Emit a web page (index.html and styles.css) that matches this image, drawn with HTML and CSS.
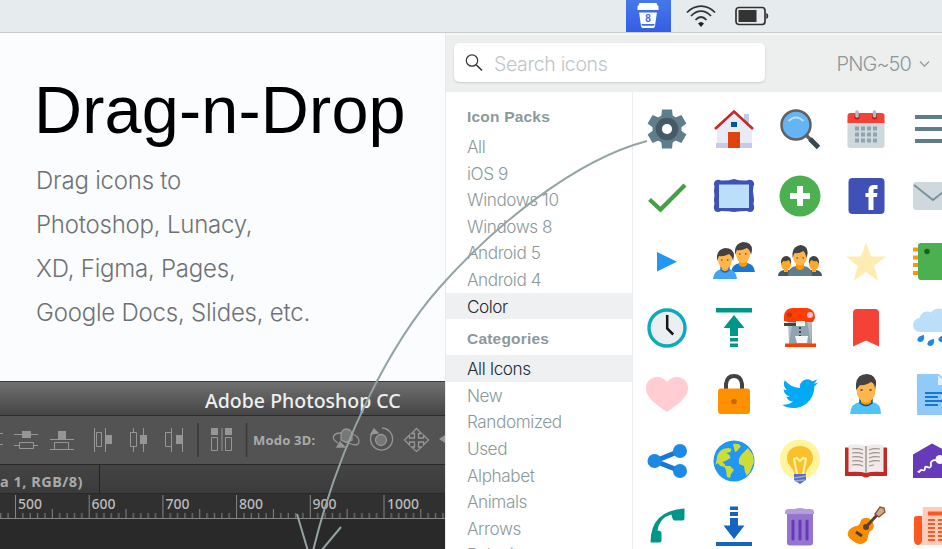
FILE: index.html
```
<!DOCTYPE html>
<html lang="en">
<head>
<meta charset="utf-8">
<title>Drag-n-Drop</title>
<link rel="stylesheet" href="styles.css">
</head>
<body>
<header class="menubar">
  <div class="tray-app">
    <svg width="24" height="30" viewBox="0 0 24 30"><path fill="#fff" d="M3.500 3h17l1 2.500 1 .5v4H1.500V6l1-.5z"/><path fill="#fff" d="M3 12h18l-2 14q-.2 2-2 2H7q-1.800 0-2-2z"/><path fill="#3d6dea" d="M3 10h18v2.500H3zM5.500 24h13l-.3 1.700H5.800z"/><text x="12" y="22" class="tray-num">8</text></svg>
  </div>
  <svg class="wifi" width="32" height="26" viewBox="0 0 32 26"><g fill="none" stroke="#303538" stroke-width="1.800"><path d="M2 10.500C10 2 22 2 30 10.500M6 14C12 7.500 20 7.500 26 14M10.500 18C14 14 18 14 21.500 18"/></g><path fill="#222" d="M13 21.500q3-3 6 0L16 25z"/></svg>
  <svg class="battery" width="34" height="20" viewBox="0 0 34 20"><rect x="1" y="1.500" width="29" height="17" rx="3" fill="none" stroke="#333" stroke-width="1.700"/><path fill="#333" d="M3.500 4h18v12h-18zM31.300 7q2 .5 2 3t-2 3z"/></svg>
</header>
<main class="stage">
  <section class="left">
    <div class="hero">
      <h1>Drag-n-Drop</h1>
      <p>Drag icons to</p>
      <p>Photoshop, Lunacy,</p>
      <p>XD, Figma, Pages,</p>
      <p>Google Docs, Slides, etc.</p>
    </div>
    <div class="ps">
      <div class="ps-title">Adobe Photoshop CC</div>
      <div class="ps-tools">
        <svg width="445" height="48" viewBox="0 0 445 48">
          <g fill="none" stroke="#969696">
            <path d="M0 17.500h3M0 28.500h3M14 18.500h24M14 29.500h24M50 23.500h24M50 33.500h24"/>
            <path fill="#535353" d="M19.500 26.500h14v6h-14zM54.500 26.500h14v7h-14z"/>
            <path d="M94.500 12v24M105.500 12v24M133.500 12v24M143.500 12v24M171.500 12v24M182.500 12v24M222 12v23"/>
            <path fill="#535353" d="M96.500 16.500h5v14h-5zM130.500 16.500h6v14h-6zM165.500 16.500h6v14h-6zM211.500 21.500h6v13h-6zM225.500 21.500h6v13h-6z"/>
          </g>
          <path fill="#969696" d="M22 15h9v7h-9zM58 15h8v8h-8zM106 19h6v9h-6zM140 19h7v9h-7zM176 19h6v9h-6zM211 12h7v7h-7zM225 12h7v7h-7z"/>
          <path stroke="#383838" stroke-width="1.500" d="M198 7v34M246.500 7v34"/>
          <text x="253" y="29" class="mode">Modo 3D:</text>
          <g fill="none" stroke="#969696" stroke-width="1.300">
            <path fill="#777" d="M341 24v-5q1-6 5-6 6 0 6 7v4q-5 4-11 0z"/><path d="M341 17c-9 0-10 6-3 10M352 18c9 3 8 10 4 11-5 0-8-3-13-4"/><path fill="#969696" d="M337 31l3-5 5 5z"/>
            <path d="M374 15a11 11 0 1 0 8-3"/><circle cx="381" cy="24" r="5.500" fill="#777"/><path fill="#969696" d="M371 18l3-5 4 4z"/>
            <path d="M416.500 12.500l5 5h-3v4.500h5v-3l5 5-5 5v-3h-5v5h3l-5 4.500-5-4.500h3v-5h-5v3l-5-5 5-5v3h5v-4.500h-3z"/>
          </g>
          <path fill="#969696" d="M439 23l6-4v8z"/>
        </svg>
      </div>
      <div class="ps-tab"><span>a 1, RGB/8)</span></div>
      <div class="ps-ruler">
        <svg width="445" height="25" viewBox="0 0 445 25">
          <defs><pattern id="ticks" x="15" y="0" width="73.700" height="25" patternUnits="userSpaceOnUse"><path stroke="#858585" d="M.5 1v23M7.900 19v5M15.200 19v5M22.600 19v5M30 19v5M37.300 15v9M44.700 19v5M52.100 19v5M59.500 19v5M66.800 19v5"/></pattern></defs>
          <path fill="url(#ticks)" d="M0 0h445v24H0z"/><path stroke="#858585" d="M0 24.500h445"/>
          <g class="nums"><text x="18" y="14.500">500</text><text x="91.500" y="14.500">600</text><text x="165.500" y="14.500">700</text><text x="239" y="14.500">800</text><text x="312.500" y="14.500">900</text><text x="387" y="14.500">1000</text></g>
        </svg>
      </div>
      <div class="ps-canvas"></div>
    </div>
  </section>
  <section class="panel">
    <div class="searchbar">
      <div class="search"><svg width="18" height="19" viewBox="0 0 18 19"><circle cx="7" cy="7.500" r="5.700" fill="none" stroke="#333" stroke-width="1.200"/><path stroke="#333" stroke-width="1.600" d="M11.200 11.700l5.800 5.800"/></svg><span>Search icons</span></div>
      <div class="format">PNG~50<svg width="11" height="8" viewBox="0 0 11 8"><path fill="none" stroke="#939d9f" stroke-width="1.300" d="M1 1.500l4.500 4.800L10 1.500"/></svg></div>
    </div>
    <div class="content">
      <nav class="side">
        <h2>Icon Packs</h2>
        <ul><li>All</li><li>iOS 9</li><li>Windows 10</li><li>Windows 8</li><li>Android 5</li><li>Android 4</li><li class="on">Color</li></ul>
        <h2 class="cat">Categories</h2>
        <ul><li class="on">All Icons</li><li>New</li><li>Randomized</li><li>Used</li><li>Alphabet</li><li>Animals</li><li>Arrows</li><li>Baby items</li></ul>
      </nav>
      <div class="grid">
        <svg viewBox="0 0 48 48"><g fill="#607d8b"><path id="tooth" d="M19 4.500h10l1 9.500H18z"/><use href="#tooth" transform="rotate(60 24 24)"/><use href="#tooth" transform="rotate(120 24 24)"/><use href="#tooth" transform="rotate(180 24 24)"/><use href="#tooth" transform="rotate(240 24 24)"/><use href="#tooth" transform="rotate(300 24 24)"/><circle cx="24" cy="24" r="14.500"/></g><circle cx="24" cy="24" r="8.300" fill="none" stroke="#455a64" stroke-width="6"/><circle cx="24" cy="24" r="5" fill="#fff"/></svg>
        <svg viewBox="0 0 48 48"><path fill="#c5cae9" d="M34 9h5v11h-5z"/><path fill="#e8eaf6" d="M24 8L7 23v20h35V23z"/><path fill="#c5cae9" d="M6 38h36v5H6z"/><path fill="#e04312" d="M18 27h12v16H18z"/><path fill="#01579b" d="M21 17h6v5h-6z"/><path fill="none" stroke="#c62828" stroke-width="2.600" d="M5 24L24 6.500 43 24"/><path fill="#bf360c" d="M27 35h1v3h-1z"/></svg>
        <svg viewBox="0 0 48 48"><path stroke="#616161" stroke-width="3.500" d="M29 29l6 6"/><path stroke="#37474f" stroke-width="5" d="M34 34l8.500 8.500"/><circle cx="20" cy="20" r="14.500" fill="#64b5f6" stroke="#616161" stroke-width="2.500"/><path fill="none" stroke="#bbdefb" stroke-width="2" d="M12.500 16q7.500-7 15 0"/></svg>
        <svg viewBox="0 0 48 48"><path fill="#cfd8dc" d="M5.500 15h37v25q0 3-3 3h-31q-3 0-3-3z"/><path fill="#f44336" d="M42.500 11v7h-37v-7q0-3 3-3h31q3 0 3 3z"/><path stroke="#b71c1c" stroke-width="5" stroke-linecap="round" d="M15 10v2M32.500 10v2"/><path stroke="#b0bec5" stroke-width="3.500" stroke-linecap="round" d="M15 7v4M32.500 7v4"/><path stroke="#90a4ae" stroke-width="4" stroke-dasharray="4 2" d="M13 23.500h22M13 29.500h22M13 35.500h22"/></svg>
        <svg viewBox="0 0 48 48"><path fill="#607d8b" d="M6 10h36v4H6zM6 22h36v4H6zM6 34h36v4H6z"/></svg>

        <svg viewBox="0 0 48 48"><path fill="none" stroke="#43a047" stroke-width="4.200" d="M6.500 27.500l11 10L42 13"/></svg>
        <svg viewBox="0 0 48 48"><path fill="#3f51b5" d="M5 9q3-2 6-.5 7 .5 13-1.500 6 2 13 1.500 3-1.500 6 .5 2 3 .5 5-1 5 0 9 1 5 0 9 1.500 4-.5 7-3 2-6 0-7 0-13 1-6-1-13-1-3 2-6 0-2-3-.5-7-1-4 0-9-1-4 0-9-1.500-2 .5-5z"/><path fill="#bbdefb" d="M9 12.500h30v23.500H9z"/></svg>
        <svg viewBox="0 0 48 48"><circle cx="24" cy="24" r="20.500" fill="#4caf50"/><path fill="#fff" d="M21 14h6v7h7v6h-7v7h-6v-7h-7v-6h7z"/></svg>
        <svg viewBox="0 0 48 48"><rect x="6.500" y="6" width="36" height="36" rx="4" fill="#3f51b5"/><path fill="#fff" d="M34.900 25h-3.400v13h-5V25h-3v-4h3v-2.400c0-3.500 1.500-5.600 5.600-5.600h3.400v4h-2.300c-1.600 0-1.700.6-1.700 1.700V21h4z"/></svg>
        <svg viewBox="0 0 48 48"><rect x="4" y="10" width="40" height="28" rx="3" fill="#cfd8dc"/><path fill="none" stroke="#78909c" stroke-width="1.800" d="M5 13l19 15 19-15"/></svg>

        <svg viewBox="0 0 48 48"><path fill="#2196f3" d="M14 14v19.500l20-9.700z"/></svg>
        <svg viewBox="0 0 48 48"><g transform="translate(11 -4)"><path fill="#1976d2" d="M10 38q1-8 9-9h7q7 1 8 9z"/><path fill="#ff9800" d="M18 24h8v7q-4 4-8 0z"/><ellipse cx="22" cy="20" rx="7" ry="9" fill="#ffb74d"/><path fill="#424242" d="M14 21v-5q1-7 8-8 9 0 9 8l-1 5q-1-5-4-7-6 3-10 2z"/><path stroke="#8b5a20" stroke-width="1.500" d="M18 20h1.500M24 20h1.500"/></g><g transform="translate(-7 2)"><path fill="#42a5f5" d="M10 39q1-9 9-10h7q7 1 8 10z"/><path fill="#ffa726" stroke="#1565c0" stroke-width="1.200" d="M18 24h8v6q-4 4-8 0z"/><ellipse cx="22" cy="20" rx="7" ry="9" fill="#ffb74d"/><path fill="#424242" d="M14 21v-5q1-7 8-8 9 0 9 8l-1 5q-1-5-4-7-6 3-10 2z"/><path stroke="#8b5a20" stroke-width="1.500" d="M18 20h1.500M24 20h1.500"/></g></svg>
        <svg viewBox="0 0 48 48"><g id="small"><path fill="#455a64" d="M2 38q0-5 6-6h6v6z"/><ellipse cx="10" cy="26" rx="5" ry="6" fill="#ffa726"/><path fill="#424242" d="M5 26v-3q1-5 6-5 5 1 4 8l-2-4q-4 2-6 1z"/><path stroke="#ffa726" stroke-width="4" d="M10 30v4"/></g><use href="#small" transform="matrix(-1 0 0 1 48 0)"/><path fill="#607d8b" d="M12 38q0-9 8-10h8q8 1 8 10z"/><path fill="#ff9800" d="M20 24h8v6q-4 4-8 0z"/><ellipse cx="24" cy="19" rx="7" ry="8.500" fill="#ffb74d"/><path fill="#424242" d="M16.500 20v-5q1-7 8-8 8 1 7 9l-1 4q-1-5-3-7-5 3-9 2z"/><path stroke="#8b5a20" stroke-width="1.500" d="M20.500 20H22M26.500 20H28"/></svg>
        <svg viewBox="0 0 48 48"><path fill="#ffecb3" d="M24 4l5 14.500h15L32 28l4.500 15L24 34l-12.500 9L16 28 4 18.500h15z"/></svg>
        <svg viewBox="0 0 48 48"><path stroke="#ff9800" stroke-width="4" d="M4 11.500h8M4 19.500h8M4 27h8M4 35h8"/><rect x="9" y="5" width="36" height="37" rx="3" fill="#4caf50"/><circle cx="18" cy="13.500" r="2.700" fill="#1b5e20"/></svg>

        <svg viewBox="0 0 48 48"><circle cx="24" cy="24" r="18" fill="#eceff1" stroke="#0aacbc" stroke-width="3.400"/><path fill="none" stroke="#161616" stroke-width="2.500" d="M24.200 11v13.500l6 6"/></svg>
        <svg viewBox="0 0 48 48"><path fill="#009688" d="M6 4h36v4.500H6zM24 11l10.500 13H28v8h-8v-8h-6.500zM20 34h8v3.500h-8zM20 39.500h8V43h-8z"/></svg>
        <svg viewBox="0 0 48 48"><path fill="#90a4ae" d="M13 18h23v24H13z"/><path fill="#b0bec5" d="M12 17h5l-4 22zM36 17h-5l4 22z"/><path fill="#ff3d00" d="M8 17v-5q1-8 9-8h14q8 1 8 10l-2 4H12zM9 39.500h31V43H9z"/><circle cx="13.500" cy="11" r="2.500" fill="#bf360c"/><circle cx="34" cy="11" r="3" fill="#f8bbd0"/><path fill="#444" d="M8 19h15v3H8z"/><path stroke="#37474f" stroke-width="2" stroke-dasharray="2 2" d="M24 23v10"/><path fill="#f5f5f5" d="M20 17h9v5h-9zM19 32h13l-1 7H21z"/></svg>
        <svg viewBox="0 0 48 48"><path fill="#f44336" d="M37 42.500l-13-6-13 6V9q0-4 4-4h18q4 0 4 4z"/></svg>
        <svg viewBox="0 0 48 48"><g fill="#bbdefb"><circle cx="11" cy="21" r="7"/><circle cx="18" cy="15" r="7.500"/><circle cx="30" cy="15" r="10.500"/><path d="M11 17h31v11H11z"/></g><path id="drop" fill="#1e88e5" d="M15 31q1 7-4 7-4-1-2-4 1-2 6-3z"/><use href="#drop" x="10" y="4"/><use href="#drop" x="21"/></svg>

        <svg viewBox="0 0 48 48"><path fill="#ffcdd2" d="M34 6c-4.500 0-8 2-10 5-2-3-5.500-5-10-5C7.500 6 3 11 3 17c0 11 13 18 21 24 8-6 21-13 21-24 0-6-4.500-11-11-11z"/></svg>
        <svg viewBox="0 0 48 48"><path fill="none" stroke="#424242" stroke-width="4" d="M16 20v-7q1-8 8-8t8 8v7"/><rect x="8" y="17.500" width="32" height="25.500" rx="3" fill="#ff9000"/><circle cx="24" cy="30.500" r="2.800" fill="#c76700"/></svg>
        <svg viewBox="0 0 48 48"><path fill="#03a9f4" d="M42 11.400c-1.300.6-2.700 1-4.200 1.100 1.500-.9 2.700-2.300 3.200-4-1.400.8-3 1.400-4.700 1.800A7.400 7.400 0 0 0 24 17c-6.200-.3-11.600-3.200-15.200-7.700-2 3.700-.5 7.700 2.300 9.800-1.200 0-2.400-.4-3.400-.9 0 3.500 2.600 6.500 6 7.200-1.100.3-2.200.4-3.400.1a7.400 7.400 0 0 0 7 5.100A15 15 0 0 1 6 33.700 20.900 20.900 0 0 0 17.300 37C31 37 38.600 25.600 38.300 15.200A15 15 0 0 0 42 11.400z"/></svg>
        <svg viewBox="0 0 48 48"><path fill="#4fc3f7" d="M8 43q1-11 10-12h12q9 1 9 12z"/><path fill="#ff9800" stroke="#01579b" stroke-width="1.500" d="M18 28h12v4q-6 5-12 0z"/><ellipse cx="24" cy="19" rx="9.500" ry="12.500" fill="#ffb74d"/><path fill="#424242" d="M14 19v-6Q15 3 25 3q10 1 9 11l-1 5q0-7-4-8-7 4-11 3z"/><path stroke="#795548" stroke-width="1.800" d="M18.500 19h2M27.500 19h2"/></svg>
        <svg viewBox="0 0 48 48"><path fill="#90caf9" d="M8 3h22l10 10v31H8z"/><path fill="#e3f2fd" d="M29 4v10h10z"/><path fill="#1976d2" d="M16 21h17v2H16zM16 25h13v2H16zM16 29h17v2H16zM16 33h13v2H16z"/></svg>

        <svg viewBox="0 0 48 48"><path fill="none" stroke="#1976d2" stroke-width="5" d="M37 14L12 24l25 10"/><g fill="#1e88e5"><circle cx="11.500" cy="24" r="7"/><circle cx="37" cy="14" r="7"/><circle cx="37" cy="34" r="7"/></g></svg>
        <svg viewBox="0 0 48 48"><circle cx="24" cy="24" r="20.500" fill="#2196f3"/><path fill="#cddc39" d="M7.500 18q3-7 11-7l3 1-1 3-4 1 3 2 1 3-5 3-3 1 3 3-1 2-4-1-3-3-2 2zM23 7q6-1 8 2l-4 5-2 1-1-4zM38 11l5 7 1 7-4 10-3 4-2-4-1-6-5-2q-1-7 4-11zM14 29l6 0 4 4-3 4-1 4-3-1-1-7z"/></svg>
        <svg viewBox="0 0 48 48"><circle cx="24" cy="22.500" r="20" fill="#fff59d"/><path fill="#fbc02d" d="M24 9c-8 0-13 5-13 12 0 6 4 8 6 12l2 5h10l2-5c2-4 6-6 6-12 0-7-5-12-13-12z"/><path fill="none" stroke="#fff59d" stroke-width="2" d="M21 37l-3-15 3-1 3 3 3-3 3 1-3 15"/><path fill="#5c6bc0" d="M18 37h12v6l-3 2-3 2-3-2-3-2z"/><path stroke="#9fa8da" stroke-width="1.500" d="M18 41l12-2M19 44l10-1"/></svg>
        <svg viewBox="0 0 48 48"><path fill="#c62828" d="M3 10.500h42v28.500H28q-4 3-8 0H3z"/><path fill="#efebe9" d="M6.500 8q11-2 17.500 1 6-3 17.500-1v27q-11-1-17.500 1-6-2-17.500-1z"/><path stroke="#bcaaa4" stroke-width="2" d="M24 9v27"/><path fill="none" stroke="#a1918b" stroke-width="1.200" d="M10 12q6-1 11 1M10 16q6-1 11 1M10 20q6-1 11 1M10 24q6-1 11 1M10 28q6-1 11 1M27 13q5-2 11-1M27 17q5-2 11-1M27 21q5-2 11-1M27 25q5-2 11-1M27 29q3-1 5-1"/></svg>
        <svg viewBox="0 0 48 48"><path fill="#673ab7" d="M4 41V17.500L23 6.500l21 11V41z"/><circle cx="31" cy="22.500" r="4.500" fill="#fff"/><path fill="none" stroke="#fff" stroke-width="1.800" d="M30 24c-6-2-9 0-8 4 0 6-6-1-6 3 0 5-4 0-5 3q-1 2-2 0"/></svg>

        <svg viewBox="0 0 48 48"><path fill="#009688" d="M7.500 39.500q0-32 34-34v10q0 2-2 2h-8q-2 0-3-6-12 3-14 16 4 0 4 3v7q0 2-2 2z"/></svg>
        <svg viewBox="0 0 48 48"><path fill="#1565c0" d="M20 3.500h8V7h-8zM20 9h8v4h-8zM20 15h8v7.500h6.500L24 36 13.500 22.500H20zM6 39h36v4H6z"/></svg>
        <svg viewBox="0 0 48 48"><path fill="#b39ddb" d="M9 9q0-3 4-3h6q5-2 10 0h5q4 0 4 3v2H9z"/><path fill="#9575cd" d="M11 11h26v28.500q0 3-3 3H14q-3 0-3-3z"/><path stroke="#673ab7" stroke-width="3" stroke-linecap="round" d="M17 18v18M24 18v18M31 18v18"/></svg>
        <svg viewBox="0 0 48 48"><path fill="#fb8c00" d="M7 27q4-4 8-4 3-1 4-6 4-4 9-1l3 4q2 4-1 7-3 1-4 6 0 5-4 7-5 3-11-2-8-5-4-11z"/><circle cx="24" cy="24" r="3" fill="#5d4037"/><path stroke="#5d4037" stroke-width="3" d="M23 25l13-14"/><path stroke="#424242" stroke-width="3" d="M14 29l6 4"/><path fill="#d7a77b" stroke="#795548" stroke-width="1.300" d="M33 11l5-7 4 1 1 4-6 5z"/></svg>
        <svg viewBox="0 0 48 48"><path fill="#ffccbc" d="M14 4h30v38H12z"/><path fill="#ff5722" d="M5 15q0-2 3-2h5v25q-1 4-4 4t-4-4zM19 8.500h24v4H19z"/><path stroke="#ff5722" stroke-width="2" stroke-dasharray="7 3" d="M19 17h25M19 21h25M19 25h25M19 29h25M19 33h25M19 37h25"/></svg>
      </div>
    </div>
  </section>
</main>
<svg class="arrow" width="942" height="549" viewBox="0 0 942 549"><path d="M647 141C575 160 495 225 440 287C392 341 340 440 313 551M297 514L308 551M341 527L321 551"/></svg>
</body>
</html>
```

FILE: styles.css
```
* { box-sizing: border-box; margin: 0; padding: 0; }
body {
  position: relative;
  display: flex;
  flex-direction: column;
  width: 942px;
  height: 549px;
  overflow: hidden;
  background: #fafcfe;
  font-family: "Liberation Sans", Arial, sans-serif;
}
svg { display: block; flex: none; }

.menubar {
  display: flex;
  flex: none;
  height: 33px;
  padding-left: 626px;
  background: #e6ebee;
  border-bottom: 1px solid #c8cccf;
}
.tray-app {
  display: flex;
  justify-content: center;
  width: 44.500px;
  background: linear-gradient(#4678e8, #345de6);
}
.tray-num { font: bold 10px "Liberation Sans", sans-serif; fill: #3d6dea; text-anchor: middle; }
.wifi { margin: 2px 0 0 14px; }
.battery { margin: 6px 0 0 18px; }

.stage { display: flex; flex: 1; min-height: 0; }
.left { display: flex; flex-direction: column; flex: none; width: 445px; }
.hero { height: 348px; padding: 39px 0 0 36px; color: #6f7274; }
.hero h1 {
  height: 87px;
  margin-left: -2px;
  color: #000;
  font-size: 66.500px;
  font-weight: 400;
  line-height: 77px;
  letter-spacing: .2px;
}
.hero p {
  height: 44px;
  font-family: Inter, "Liberation Sans", sans-serif;
  font-size: 24px;
  font-weight: 300;
  line-height: 44px;
  letter-spacing: -.22px;
  white-space: nowrap;
}

.ps { flex: 1; background: #292929; border-top: 1px solid #24443d; font-family: "Open Sans", "Noto Sans", sans-serif; overflow: hidden; }
.ps-title {
  height: 34px;
  padding-left: 205px;
  background: linear-gradient(#707070, #454545);
  border-bottom: 1px solid #2c2c2c;
  color: #eee;
  font-family: "Noto Sans", sans-serif;
  font-size: 19.500px;
  font-weight: 500;
  line-height: 37px;
}
.ps-tools { height: 49px; background: #535353; border-bottom: 1px solid #292929; }
.mode { font: bold 13px "Noto Sans", sans-serif; fill: #aaa; letter-spacing: .2px; }
.ps-tab { height: 29px; background: linear-gradient(#444, #3b3b3b); border-bottom: 1px solid #292929; }
.ps-tab span {
  display: block;
  width: 100px;
  height: 28px;
  border-right: 1px solid #222;
  color: #aaa;
  font: bold 14.500px/32px "Noto Sans", sans-serif;
  letter-spacing: .5px;
}
.ps-ruler { height: 25px; background: #303030; }
.nums { font: 500 14px "Noto Sans", sans-serif; fill: #bbb; }

.panel { display: flex; flex-direction: column; flex: 1; min-width: 0; background: #fff; border-left: 1px solid #e6eaeb; }
.searchbar { display: flex; align-items: center; flex: none; height: 59px; padding: 0 12px 3px 8px; background: #edefef; border-top: 2px solid #f6f7f7; }
.search {
  display: flex;
  align-items: center;
  gap: 11px;
  width: 311px;
  height: 39px;
  padding-left: 11px;
  border-radius: 5px;
  background: #fff;
  box-shadow: 0 1px 2px #c4c8c9;
  color: #bfc5c7;
}
.search span, .format { font-family: Inter, sans-serif; font-size: 20px; font-weight: 300; }
.search span { padding-top: 3px; font-size: 19.500px; letter-spacing: -.35px; }
.format { display: flex; align-items: center; gap: 8px; margin: 4px 0 0 auto; color: #8c9799; white-space: nowrap; letter-spacing: -.9px; }

.content { display: flex; flex: 1; min-height: 0; overflow: hidden; }
.side { flex: none; width: 187px; padding-top: 11px; border-right: 1px solid #eceeef; color: #8c999b; }
.side h2 { height: 30px; padding-left: 21px; font: bold 15.500px/28px "Liberation Sans", sans-serif; letter-spacing: .2px; }
.side .cat { height: 30px; margin-top: 6px; }
.side ul { list-style: none; }
.side li { height: 26.600px; padding-left: 21px; font: 300 17.200px/27px Inter, sans-serif; letter-spacing: -.45px; white-space: nowrap; }
.side .on { background: #eef0f1; color: #1d2b36; }

.grid {
  display: grid;
  flex: none;
  grid-template-columns: repeat(5, 66.350px);
  grid-auto-rows: 66.350px;
  place-items: center;
  margin: 4px 0 0 1px;
}
.grid > svg { width: 48px; height: 48px; }

.arrow { position: absolute; top: 0; left: 0; fill: none; stroke: #94a3a4; stroke-width: 2; pointer-events: none; }
```
